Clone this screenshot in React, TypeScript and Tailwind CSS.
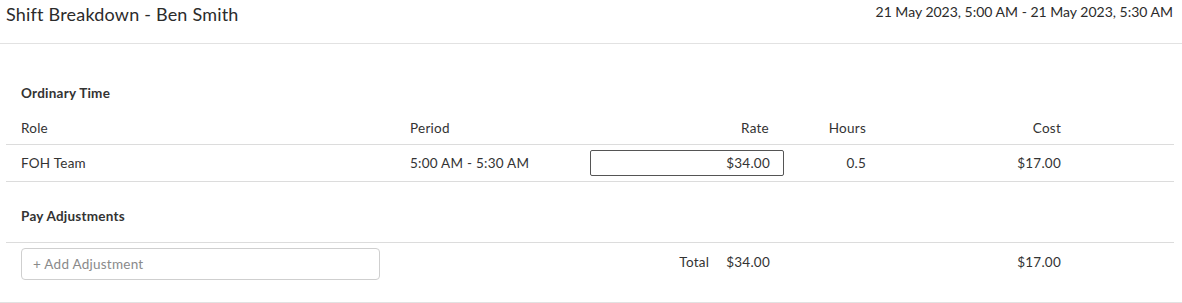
const font = { fontFamily: "Lato, 'Noto Sans', sans-serif" };

const cols = {
  role: "w-[389px] pl-[15px]",
  period: "w-[180px] pl-[15px]",
  rate: "w-[209px] pl-[15px]",
  hours: "w-[97px] pr-[15px] text-right",
  cost: "w-[195px] pr-[15px] text-right",
};

export default function App() {
  return (
    <div className="w-[1182px] h-[303px] bg-white text-[#333] overflow-hidden" style={font}>
      <div className="h-[44px] border-b border-[#e2e2e2] flex items-start justify-between pl-[6px] pr-[9px]">
        <h1 className="text-[18px] leading-[28px] tracking-[0.2px] text-[#2b2b2b]">
          Shift Breakdown - Ben Smith
        </h1>
        <div className="text-[14px] leading-[24px] text-[#2b2b2b]">
          21 May 2023, 5:00 AM - 21 May 2023, 5:30 AM
        </div>
      </div>

      <div className="border-b border-[#e2e2e2] h-[259px] px-[6px]">
        <div className="w-[1168px] text-[13.5px] tracking-[0.25px]">
          <div className="pt-[39px] pb-[9px] pl-[15px] font-bold leading-[20px]">Ordinary Time</div>

          <div className="flex items-center pt-[1px] h-[33px] border-b border-[#dcdcdc]">
            <div className={cols.role}>Role</div>
            <div className={cols.period}>Period</div>
            <div className={`${cols.rate} text-right pr-[15px]`}>Rate</div>
            <div className={cols.hours}>Hours</div>
            <div className={cols.cost}>Cost</div>
          </div>

          <div className="flex items-center h-[37px] border-b border-[#dcdcdc]">
            <div className={cols.role}>FOH Team</div>
            <div className={cols.period}>5:00 AM - 5:30 AM</div>
            <div className={cols.rate}>
              <div className="h-[26px] border border-[#555] rounded-[2px] flex items-center justify-end pr-[13px]">
                $34.00
              </div>
            </div>
            <div className={cols.hours}>0.5</div>
            <div className={cols.cost}>$17.00</div>
          </div>

          <div className="pt-[24px] pb-[16px] pl-[15px] font-bold leading-[20px]">Pay Adjustments</div>

          <div className="flex items-start border-t border-[#dcdcdc] pt-[5px]">
            <div className="pl-[15px] w-[389px]">
              <div className="h-[32px] w-[359px] border border-[#cfcfcf] rounded-[4px] flex items-center pt-[1px] pl-[11px] text-[#8a8a8a]">
                + Add Adjustment
              </div>
            </div>
            <div className="w-[180px]" />
            <div className="w-[209px] h-[28px] flex items-center justify-end pr-[14px] gap-[17px]">
              <span>Total</span>
              <span>$34.00</span>
            </div>
            <div className="w-[97px]" />
            <div className={`${cols.cost} h-[28px] flex items-center justify-end`}>$17.00</div>
          </div>
        </div>
      </div>
    </div>
  );
}
